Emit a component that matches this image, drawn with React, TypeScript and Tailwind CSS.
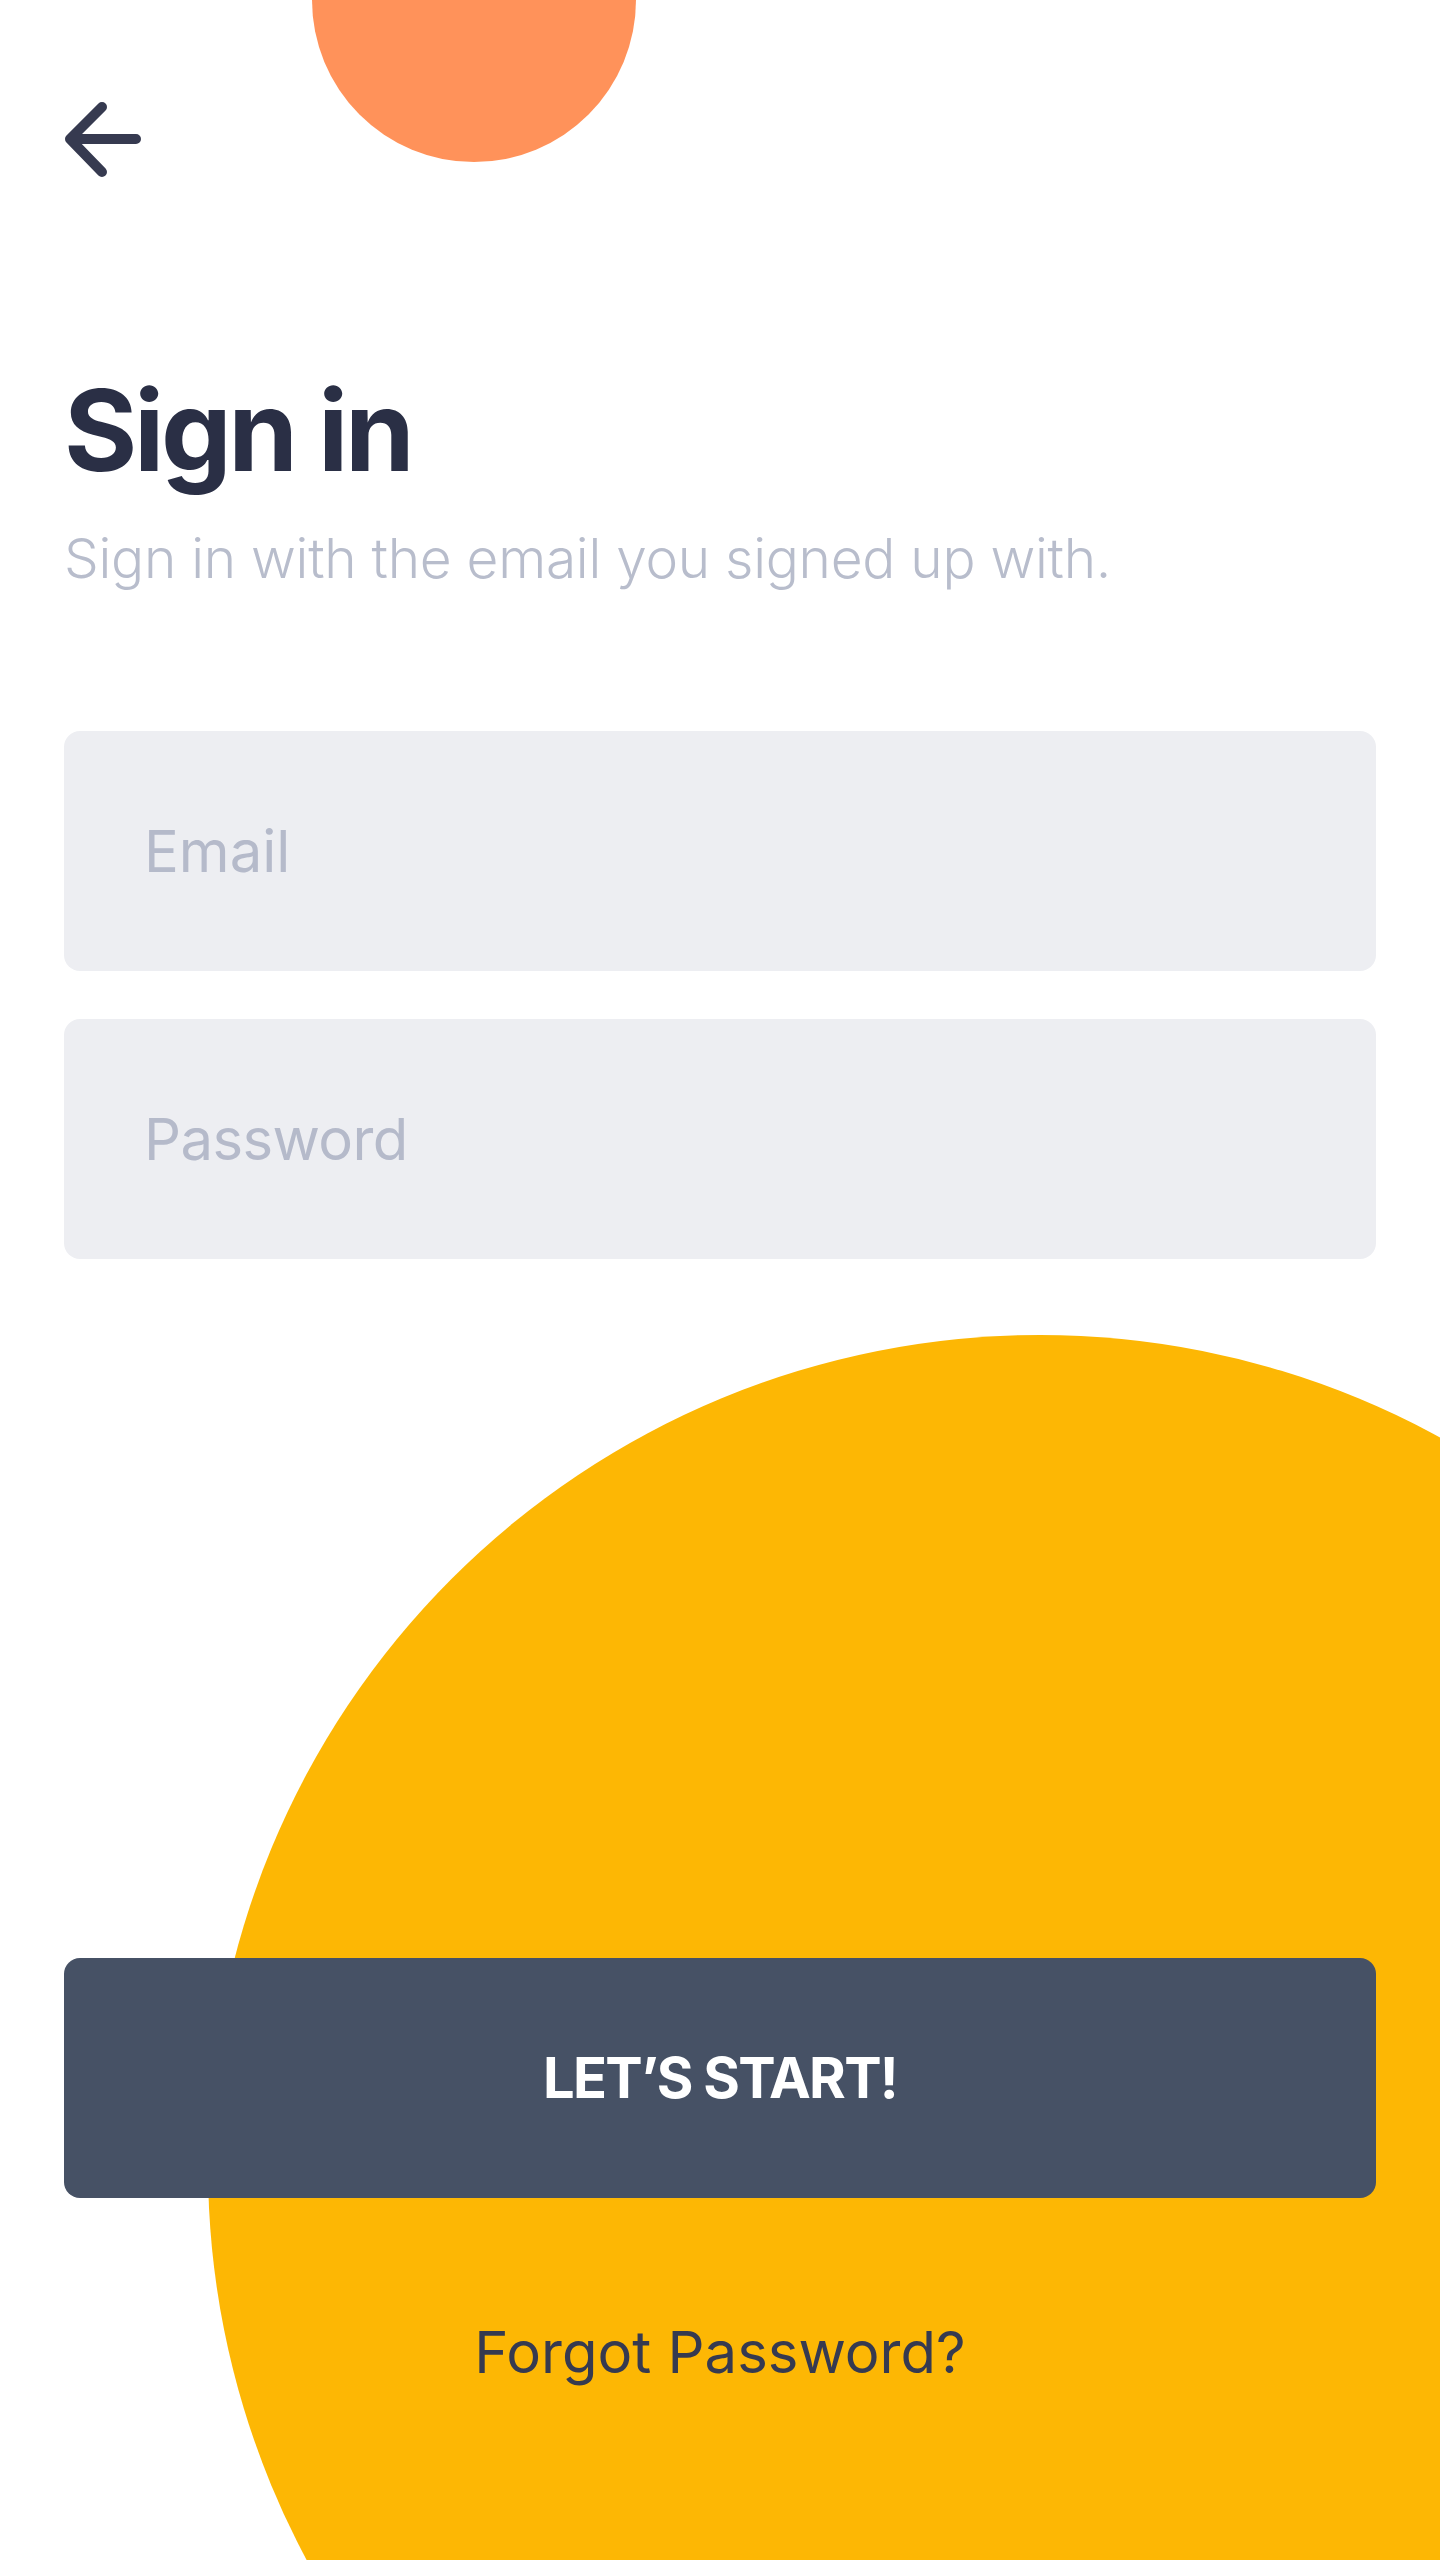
import React from "react";

const SignIn = () => {
  return (
    <div className="relative w-full h-[2560px] overflow-hidden bg-white font-['Inter',sans-serif]">
      {/* decorative blobs */}
      <div className="absolute left-[312px] top-[-162px] w-[324px] h-[324px] rounded-full bg-[#FF925A]" />
      <div className="absolute left-[208px] top-[1335px] w-[1664px] h-[1664px] rounded-full bg-[#FDB704]" />

      <div className="relative z-10 flex flex-col px-[64px] pt-[94px]">
        <button className="w-[90px] h-[90px] -ml-[4px] text-[#363A50]" aria-label="Back">
          <svg width="90" height="90" viewBox="0 0 90 90" fill="none">
            <path
              d="M42 13 L10 45 L42 78 M10 45 H76"
              stroke="currentColor"
              strokeWidth="10"
              strokeLinecap="round"
              strokeLinejoin="round"
            />
          </svg>
        </button>

        <h1 className="mt-[190px] text-[112px] leading-none font-bold tracking-[-0.03em] text-[#2A2F45]">
          Sign in
        </h1>
        <p className="mt-[45px] text-[55px] leading-none font-light tracking-[-0.005em] text-[#B8BDCC]">
          Sign in with the email you signed up with.
        </p>

        <div className="mt-[145px] flex flex-col gap-[48px]">
          <input
            type="email"
            placeholder="Email"
            className="h-[240px] w-full rounded-[16px] bg-[#EDEEF2] pl-[80px] text-[58px] text-[#2A2F45] placeholder:text-[#B5BACA] outline-none"
          />
          <input
            type="password"
            placeholder="Password"
            className="h-[240px] w-full rounded-[16px] bg-[#EDEEF2] pl-[80px] text-[58px] tracking-[-0.01em] text-[#2A2F45] placeholder:text-[#B5BACA] outline-none"
          />
        </div>

        <button className="mt-[699px] h-[240px] w-full rounded-[16px] bg-[#465165] text-[56px] font-bold tracking-[-0.03em] text-white">
          LET’S START!
        </button>

        <a className="mt-[125px] self-center text-[58px] leading-none text-[#363A50]" href="#">
          Forgot Password?
        </a>
      </div>
    </div>
  );
};

export default function App() {
  return <SignIn />;
}
